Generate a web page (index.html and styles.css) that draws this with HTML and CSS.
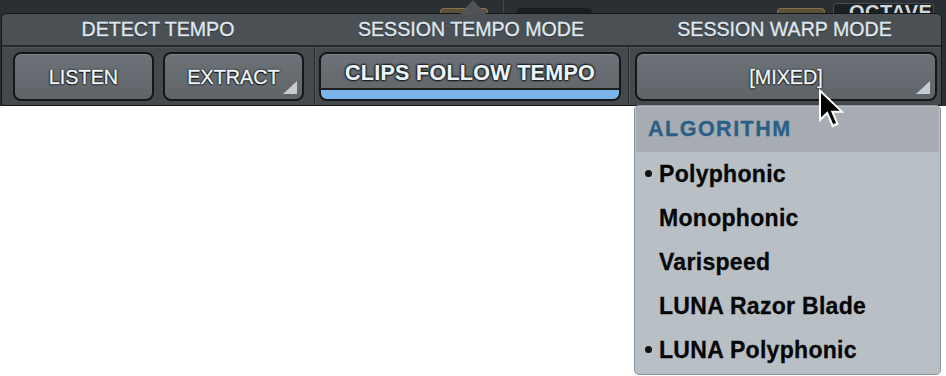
FILE: index.html
```html
<!DOCTYPE html>
<html>
<head>
<meta charset="utf-8">
<link rel="stylesheet" href="styles.css">
</head>
<body>
<div class="app">
  <div class="topbar">
    <div class="tb-brown b1"></div>
    <div class="tb-line"></div>
    <div class="tb-dark"></div>
    <div class="tb-brown b2"></div>
    <div class="tb-octave"><span class="octave-text">OCTAVE</span></div>
  </div>
  <div class="main">
    <div class="panel">
      <div class="notch"></div>
      <div class="titles">
        <div class="title">DETECT TEMPO</div>
        <div class="title">SESSION TEMPO MODE</div>
        <div class="title">SESSION WARP MODE</div>
      </div>
      <div class="controls">
        <div class="group g1">
          <div class="btn small">LISTEN</div>
          <div class="btn small">EXTRACT<span class="tri"></span></div>
        </div>
        <div class="group g2">
          <div class="btn wide active">CLIPS FOLLOW TEMPO</div>
        </div>
        <div class="group g3">
          <div class="btn wide">[MIXED]<span class="tri"></span></div>
        </div>
      </div>
    </div>
  </div>
  <div class="menu">
    <div class="menu-head">ALGORITHM</div>
    <div class="item checked"><span class="bullet"></span>Polyphonic</div>
    <div class="item"><span class="bullet"></span>Monophonic</div>
    <div class="item"><span class="bullet"></span>Varispeed</div>
    <div class="item"><span class="bullet"></span>LUNA Razor Blade</div>
    <div class="item checked"><span class="bullet"></span>LUNA Polyphonic</div>
  </div>
  <svg class="cursor" width="30" height="42" viewBox="0 0 15 21">
    <path d="M1 0.6 L1 17.6 L5 13.9 L7.6 20.2 L10.9 18.8 L8.4 12.9 L13.6 12.9 Z" fill="#fff"/>
    <path d="M2 3 L2 15.2 L5.3 12.1 L8.1 18.6 L9.5 18 L6.9 11.9 L11.3 11.9 Z" fill="#000"/>
  </svg>
</div>
</body>
</html>
```

FILE: styles.css
```css
* { box-sizing: border-box; }
html, body { margin: 0; padding: 0; }
body {
  width: 946px;
  height: 376px;
  overflow: hidden;
  background: #ffffff;
  font-family: "Liberation Sans", Arial, sans-serif;
}
.app { position: relative; width: 946px; height: 376px; }

/* background app strip */
.topbar {
  height: 13px;
  background: #2a2f33;
  display: flex;
  align-items: flex-end;
  overflow: hidden;
}
.tb-brown {
  width: 48px;
  height: 5px;
  background: #5f5038;
  border: 1px solid #86714b;
  border-bottom: 0;
  border-radius: 4px 4px 0 0;
}
.tb-brown.b1 { margin-left: 440px; }
.tb-brown.b2 { margin-left: 185px; }
.tb-line { align-self: stretch; width: 1px; background: #42474b; margin-left: 15px; }
.tb-dark {
  width: 75px;
  height: 5px;
  margin-left: 13px;
  background: #1b1f22;
  border-radius: 4px 4px 0 0;
}
.tb-octave {
  margin-left: 8px;
  width: 101px;
  height: 10px;
  background: #1c2023;
  border: 1px solid #474c50;
  border-bottom: 0;
  border-radius: 4px 4px 0 0;
  padding-left: 15px;
  overflow: hidden;
}
.octave-text {
  display: block;
  height: 9px;
  overflow: hidden;
  color: #cfd6dc;
  font-weight: bold;
  font-size: 20px;
  line-height: 16px;
  letter-spacing: 0.5px;
}

/* panel */
.main {
  display: flex;
  height: 93px;
  background: #2a2f33;
}
.panel {
  position: relative;
  margin-left: 1px;
  width: 941px;
  height: 93px;
  border: 1px solid #141618;
  border-radius: 6px 6px 3px 3px;
  background: #45494d;
}
.notch {
  position: absolute;
  left: 458px;
  top: -14px;
  width: 0;
  height: 0;
  border-left: 13px solid transparent;
  border-right: 13px solid transparent;
  border-bottom: 14px solid #505458;
}
.titles {
  display: grid;
  grid-template-columns: 312px 314px 1fr;
  height: 31px;
  background: #4b5054;
  border-radius: 5px 5px 0 0;
}
.title {
  text-align: center;
  color: #dfe8f0;
  font-size: 19.6px;
  line-height: 31px;
  -webkit-text-stroke: 0.35px #dfe8f0;
  text-shadow: 0 1px 1px rgba(0,0,0,0.5);
}
.controls {
  display: grid;
  grid-template-columns: 312px 314px 1fr;
  height: 60px;
  border-top: 2px solid #26292c;
  box-shadow: inset 0 1px #505458;
}
.group { display: flex; padding-top: 5px; }
.g1 { padding-left: 11px; gap: 9px; }
.g2, .g3 {
  border-left: 1px solid #2a2d30;
  box-shadow: inset 1px 0 #53575b;
}
.g2 { padding-left: 4px; }
.g3 { padding-left: 6px; }

.btn {
  position: relative;
  height: 49px;
  border: 2px solid #141618;
  border-radius: 8px;
  background: linear-gradient(#6c7277, #5e6468);
  box-shadow: inset 0 1px #7c8287;
  color: #edf4fa;
  font-size: 19.8px;
  display: flex;
  align-items: center;
  justify-content: center;
  padding-top: 2px;
  -webkit-text-stroke: 0.4px #edf4fa;
  text-shadow: 0 0 1px #000, 0 0 2px #000, 0 0 2px #000, 0 1px 1px #000;
}
.btn.small { width: 141px; }
.btn.wide { width: 302px; }
.btn.active {
  font-weight: bold;
  font-size: 21.5px;
  letter-spacing: 0.3px;
  padding-top: 0;
  padding-bottom: 6px;
  color: #eaf5fd;
  -webkit-text-stroke: 0.2px #eaf5fd;
  text-shadow: 0 0 1px #000, 0 0 2px #000, 0 0 2px #000, 0 0 3px #000;
}
.btn.active::after {
  content: "";
  position: absolute;
  left: 0;
  right: 0;
  bottom: 0;
  height: 9px;
  background: #7ab5eb;
  border-top: 2px solid #1b1d1f;
  border-radius: 0 0 6px 6px;
}
.tri {
  position: absolute;
  right: 5px;
  bottom: 5px;
  width: 14px;
  height: 13px;
  background: #c5ccd2;
  clip-path: polygon(100% 0, 100% 100%, 0 100%);
}

/* dropdown menu */
.menu {
  position: absolute;
  left: 634px;
  top: 105px;
  width: 307px;
  height: 270px;
  background: #b9c0c5;
  border: 1px solid #8d9499;
  border-radius: 5px;
  padding: 1px;
}
.menu-head {
  height: 45px;
  background: #a6acb1;
  color: #2b5f88;
  font-weight: bold;
  font-size: 21.5px;
  letter-spacing: 1.5px;
  line-height: 45px;
  padding-left: 12px;
  border-radius: 3px 3px 0 0;
  -webkit-text-stroke: 0.3px #2b5f88;
}
.item {
  height: 44px;
  display: flex;
  align-items: center;
  padding-left: 9px;
  font-weight: bold;
  font-size: 23px;
  letter-spacing: 0.3px;
  color: #050505;
  -webkit-text-stroke: 0.3px #050505;
}
.bullet { width: 14px; height: 7px; flex: none; position: relative; top: -1px; }
.item.checked .bullet::before {
  content: "";
  display: block;
  width: 7px;
  height: 7px;
  border-radius: 50%;
  background: #111;
}

.cursor {
  position: absolute;
  left: 817px;
  top: 87px;
}
```
